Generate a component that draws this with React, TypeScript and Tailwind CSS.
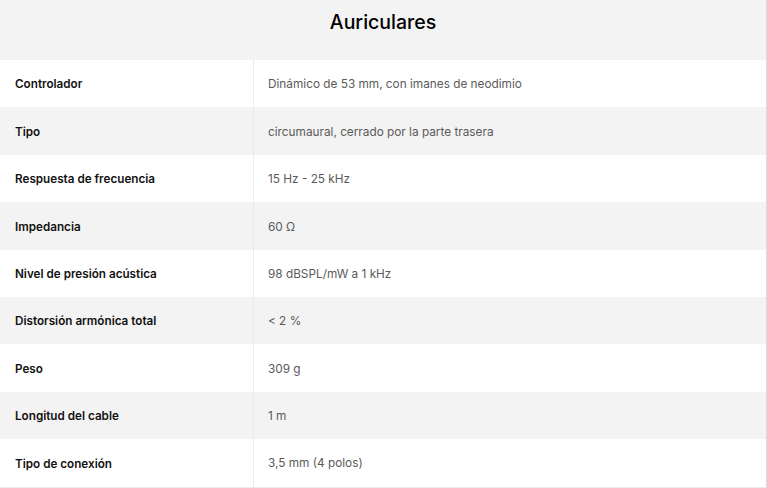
const specs = [
  { label: "Controlador", value: "Dinámico de 53 mm, con imanes de neodimio" },
  { label: "Tipo", value: "circumaural, cerrado por la parte trasera" },
  { label: "Respuesta de frecuencia", value: "15 Hz - 25 kHz" },
  { label: "Impedancia", value: "60 Ω" },
  { label: "Nivel de presión acústica", value: "98 dBSPL/mW a 1 kHz" },
  { label: "Distorsión armónica total", value: "< 2 %" },
  { label: "Peso", value: "309 g" },
  { label: "Longitud del cable", value: "1 m" },
  { label: "Tipo de conexión", value: "3,5 mm (4 polos)" },
];

export default function App() {
  return (
    <div className="h-[488px] w-[767px] overflow-hidden bg-white font-['Inter',sans-serif]">
      <div className="w-[767px] border-r border-[#dcdcdc]">
        {/* Heading */}
        <div className="flex h-[60px] justify-center bg-[#f3f3f3] pt-[9px]">
          <h2 className="text-[19.5px] font-medium leading-[26px] text-black">Auriculares</h2>
        </div>

        {/* Rows */}
        <div className="border-b border-[#ececec]">
          {specs.map((s, i) => (
            <div
              key={s.label}
              className={`flex h-[47.4px] ${i % 2 === 1 ? "bg-[#f3f3f3]" : "bg-white"}`}
            >
              <div className="flex w-[254px] shrink-0 items-center border-r border-[#ebebeb] pl-[15px] pt-[3px] text-[11.7px] font-semibold text-[#111]">
                {s.label}
              </div>
              <div className="flex items-center pl-[14px] pt-[3px] text-[11.8px] text-[#5a5a5a]">
                {s.value}
              </div>
            </div>
          ))}
        </div>
      </div>
    </div>
  );
}
